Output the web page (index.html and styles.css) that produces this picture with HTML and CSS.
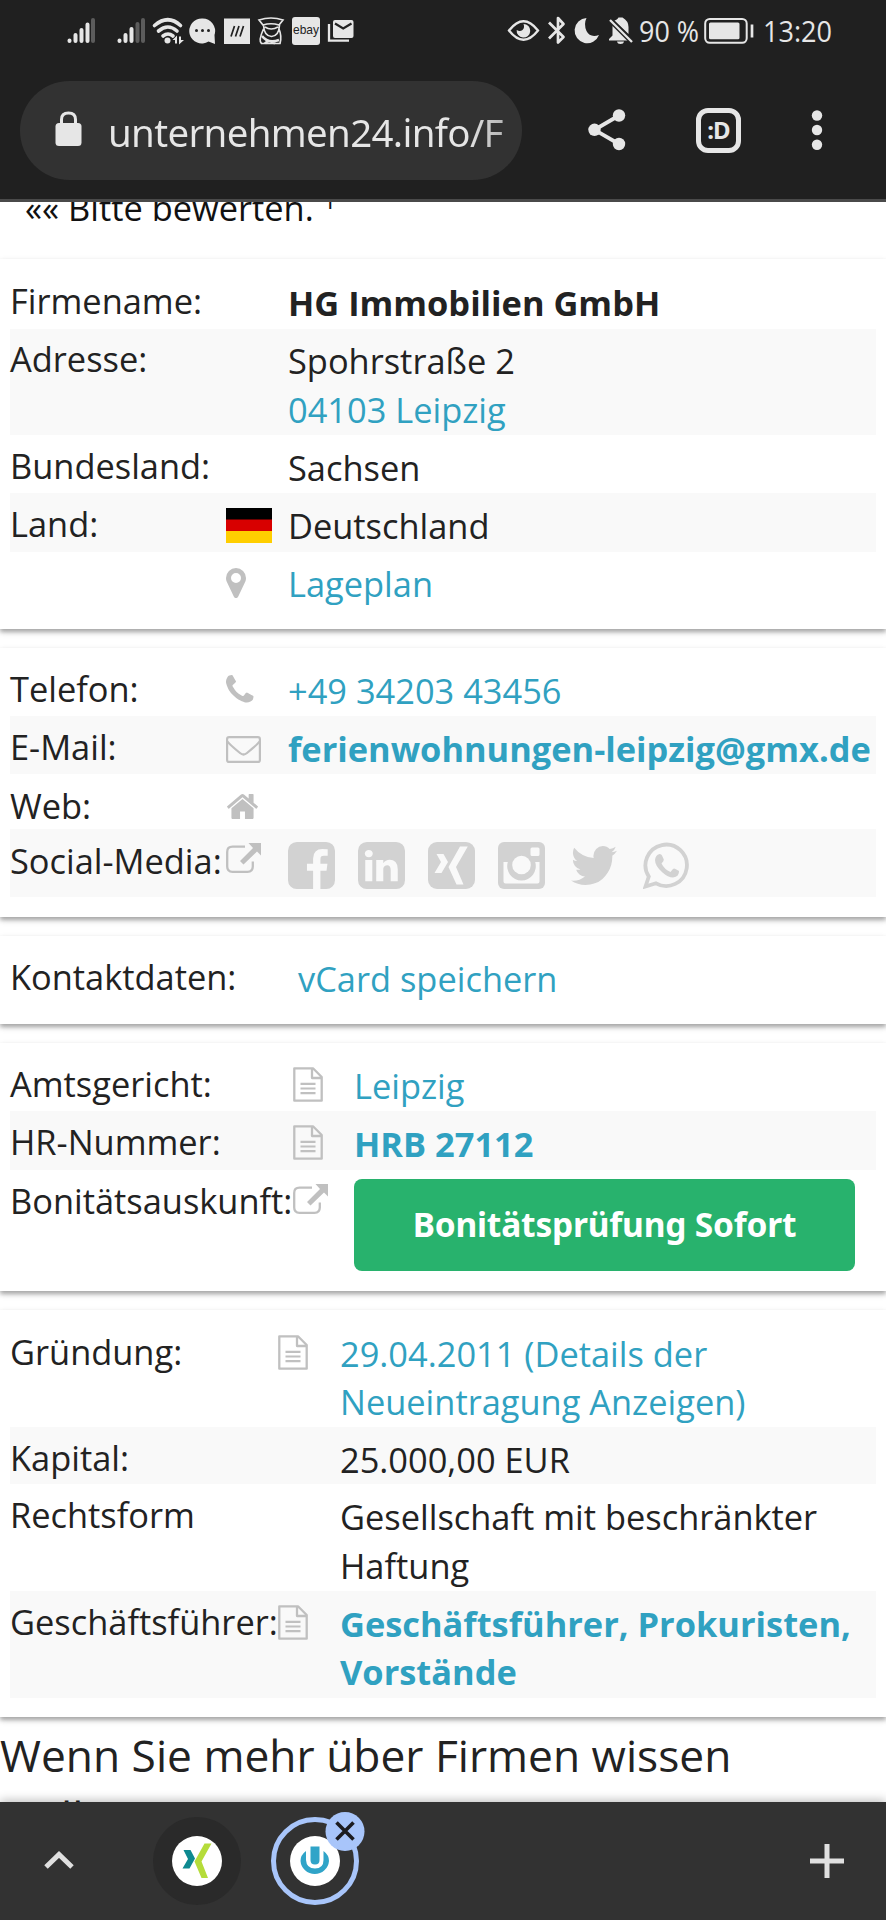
FILE: index.html
```html
<!DOCTYPE html>
<html lang="de">
<head>
<meta charset="utf-8">
<title>HG Immobilien GmbH</title>
<link rel="stylesheet" href="styles.css">
</head>
<body>
<svg class="defs" width="0" height="0">
  <symbol id="doc" viewBox="0 0 30 35"><path d="M1.3 1.3H20L28.7 10V33.7H1.3ZM19 1.3V11H28.7" fill="none" stroke="#c0c0c0" stroke-width="2.3" stroke-linejoin="round"/><path d="M7.5 16.8H22.5M7.5 21.5H22.5M7.5 26.2H22.5" stroke="#c0c0c0" stroke-width="2.2"/></symbol>
  <symbol id="ext" viewBox="0 0 35 30"><path d="M19 3.7H6.5Q1.2 3.7 1.2 9V23.5Q1.2 28.8 6.5 28.8H21.5Q26.8 28.8 26.8 23.5V18.500" fill="none" stroke="#c0c0c0" stroke-width="2.3"/><path d="M22.500 0H35V12.500L31 8.600 17.500 21.500 14 18 27 5Z" fill="#c0c0c0"/></symbol>
</svg>
<div class="screen">
  <header class="chrome">
    <div class="status">
      <svg class="icon-signal" width="47" height="62" viewBox="62 0 47 62"><g stroke="#e6e6e6" stroke-width="4" stroke-linecap="round"><path d="M69.500 40.500V41M75.500 35V41M81.500 30V41M87.500 24.500V41"/><path d="M93 20V41" stroke="#5c5c5c"/></g></svg>
      <svg width="42" height="62" viewBox="109 0 42 62"><g stroke="#e6e6e6" stroke-width="4" stroke-linecap="round"><path d="M119.500 40.500V41M125.500 35V41M131.500 29V41"/><path d="M137.500 24V41M143 20V41" stroke="#5c5c5c"/></g></svg>
      <svg width="36" height="62" viewBox="151 0 36 62"><g fill="none" stroke="#e6e6e6" stroke-width="3.600" stroke-linecap="round"><path d="M154.500 25.500Q168 14 180.500 25.500M158.500 31Q168 23 177 31M163 36Q168 32 173 36"/></g><circle cx="167.500" cy="40.500" r="3" fill="#e6e6e6"/><path d="M172.500 40 177 35.500V43.500H175V40ZM179 36.500H181V40H184L179 44.500Z" fill="#e6e6e6"/></svg>
      <svg width="33" height="62" viewBox="187 0 33 62"><path d="M202.500 18.500A12.500 12.500 0 1 0 208.500 41.500L215 44 214.500 35A12.500 12.500 0 0 0 202.500 18.500Z" fill="#e6e6e6"/><g fill="#222"><circle cx="196.500" cy="30.500" r="1.500"/><circle cx="202.500" cy="30.500" r="1.500"/><circle cx="208.500" cy="30.500" r="1.500"/></g></svg>
      <svg width="34" height="62" viewBox="220 0 34 62"><path d="M224 18.500H250V44H224Z" fill="#e6e6e6"/><path d="M231 36.500 234.500 26M235.500 36.500 239 26M240 36.500 243.500 26" stroke="#222" stroke-width="1.700"/></svg>
      <svg width="34" height="62" viewBox="254 0 34 62"><g fill="none" stroke="#e6e6e6" stroke-width="1.700"><path d="M259 20Q271 16 283 20L279 25Q271 22.500 263 25ZM263.500 25Q264 36 271.500 36.500 279 36 279.500 25M265 27Q271 31 278 27M263.500 29Q258 41 261.500 43.500H280Q282 36 279 29"/><path d="M262 36Q268 44 279 40M265 43.500Q268 39 275 43.500" stroke-width="2.500"/></g></svg>
      <svg width="36" height="62" viewBox="288 0 36 62"><rect x="292" y="17" width="28" height="28" rx="3" fill="#e6e6e6"/><text class="ebay" x="293" y="34" textLength="26" lengthAdjust="spacingAndGlyphs">ebay</text></svg>
      <svg width="34" height="62" viewBox="324 0 34 62"><rect x="333" y="20" width="20.500" height="18" rx="2" fill="#e6e6e6"/><path d="M335 23.500 343.200 28.500 351.500 23.500" fill="none" stroke="#222" stroke-width="2.200"/><path d="M329 24V40.700H349" fill="none" stroke="#e6e6e6" stroke-width="2.300"/></svg>
      <svg class="icon-eye" width="38" height="62" viewBox="504 0 38 62"><path d="M509 30.500Q523.500 12 538 30.500 523.500 49 509 30.500Z" fill="none" stroke="#e6e6e6" stroke-width="2.300"/><path d="M523.500 24A6.800 6.800 0 1 1 516.700 30Q520 32 522.500 30 525 27.500 523.500 24Z" fill="#e6e6e6"/></svg>
      <svg width="30" height="62" viewBox="542 0 30 62"><path d="M549 22.500 563.500 37 558 42.500V18L563.500 24 549 38.500" fill="none" stroke="#e6e6e6" stroke-width="2.700" stroke-linejoin="round"/></svg>
      <svg width="32" height="62" viewBox="572 0 32 62"><path d="M586.500 18A12.600 12.600 0 1 0 599 35Q590 38 586.500 31 583.500 24 586.500 18Z" fill="#e6e6e6"/></svg>
      <svg width="34" height="62" viewBox="604 0 34 62"><path d="M612 22 630 40.500H609V39L612.500 35.500V27Q612.500 24 613.500 22.500ZM616 20Q618 18.800 618.500 17.500H622.500Q628.500 21 628.500 27V34L614.500 20.500ZM617 41.500H624Q623.500 44 620.500 44T617 41.500Z" fill="#e6e6e6"/><path d="M610 20 632 42" stroke="#222" stroke-width="5"/><path d="M610 20 632 42" stroke="#e6e6e6" stroke-width="2.300"/></svg>
      <svg width="64" height="62" viewBox="638 0 64 62"><text class="status-text" x="639" y="42" textLength="60" lengthAdjust="spacingAndGlyphs">90 %</text></svg>
      <svg width="55" height="62" viewBox="702 0 55 62"><rect x="705.200" y="19" width="41.500" height="23.800" rx="4.500" fill="none" stroke="#e6e6e6" stroke-width="2"/><rect x="709" y="22.500" width="30.500" height="16.800" rx="1.500" fill="#e6e6e6"/><path d="M752 24.500V37.500" stroke="#e6e6e6" stroke-width="2.700"/></svg>
      <svg width="80" height="62" viewBox="757 0 80 62"><text class="status-text" x="763" y="42" textLength="69" lengthAdjust="spacingAndGlyphs">13:20</text></svg>
    </div>
    <div class="toolbar">
      <div class="omnibox">
        <svg width="27" height="36" viewBox="0 0 27 36"><rect x="0.500" y="12" width="26" height="23" rx="3.500" fill="#e6e6e6"/><path d="M6.500 13V8.500Q6.500 2 13.500 2T20.500 8.500V13" fill="none" stroke="#e6e6e6" stroke-width="3"/></svg>
        <span class="url">unternehmen24.info/F</span>
      </div>
      <svg class="share" width="38" height="42" viewBox="0 0 38 42"><path d="M31 6.500 6.500 20.800 31 35" fill="none" stroke="#e6e6e6" stroke-width="3.800"/><g fill="#e6e6e6"><circle cx="31" cy="6.500" r="6.200"/><circle cx="6.500" cy="20.800" r="6.200"/><circle cx="31" cy="35" r="6.200"/></g></svg>
      <div class="tabs">:D</div>
      <svg class="dots" width="12" height="42" viewBox="0 0 12 42" fill="#e6e6e6"><circle cx="6" cy="6.500" r="5.200"/><circle cx="6" cy="21" r="5.200"/><circle cx="6" cy="35.800" r="5.200"/></svg>
    </div>
  </header>

  <main class="page">
    <div class="rating"><span class="rating-text">«« Bitte bewerten. <sup>1</sup></span></div>

    <section class="card card-firm">
      <div class="row"><div class="label">Firmename:</div><div class="icon"></div><div class="value strong">HG Immobilien GmbH</div></div>
      <div class="row striped double"><div class="label">Adresse:</div><div class="icon"></div><div class="value">Spohrstraße 2<br><a>04103 Leipzig</a></div></div>
      <div class="row"><div class="label">Bundesland:</div><div class="icon"></div><div class="value">Sachsen</div></div>
      <div class="row striped"><div class="label">Land:</div><div class="icon flag-cell"><svg width="46" height="35" viewBox="0 0 46 35"><path d="M0 0H46V12H0Z"/><path d="M0 11.500H46V23.500H0Z" fill="#d80000"/><path d="M0 23H46V35H0Z" fill="#ffce00"/></svg></div><div class="value">Deutschland</div></div>
      <div class="row"><div class="label"></div><div class="icon pin-cell"><svg width="20" height="30" viewBox="384 128 1024 1536" fill="#c0c0c0"><path d="M1152 640q0-106-75-181t-181-75-181 75-75 181 75 181 181 75 181-75 75-181zm256 0q0 109-33 179l-364 774q-16 33-47.500 52t-67.500 19-67.500-19-46.500-52l-365-774q-33-70-33-179 0-212 150-362t362-150 362 150 150 362z"/></svg></div><div class="value"><a>Lageplan</a></div></div>
    </section>

    <section class="card card-contact">
      <div class="row"><div class="label">Telefon:</div><div class="icon phone-cell"><svg width="27.500" height="27.500" viewBox="192 128 1408 1408" fill="#c0c0c0"><path d="M1600 1240q0 27-10 70.500t-21 68.500q-21 50-122 106-94 51-186 51-27 0-52.500-3.500t-57.500-12.500-47.500-14.500-55.500-20.500-49-18q-98-35-175-83-128-79-264.500-215.500t-215.500-264.500q-48-77-83-175-3-9-18-49t-20.500-55.500-14.500-47.500-12.500-57.500-3.500-52.500q0-92 51-186 56-101 106-122 25-11 68.500-21t70.500-10q14 0 21 3 18 6 53 76 11 19 30 54t35 63.500 31 53.500q3 4 17.500 25t21.500 35.500 7 28.500q0 20-28.500 50t-62 55-62 53-28.500 46q0 9 5 22.500t8.500 20.500 14 24 11.500 19q76 137 174 235t235 174q2 1 19 11.500t24 14 20.500 8.500 22.500 5q18 0 46-28.500t53-62 55-62 50-28.500q14 0 28.500 7t35.500 21.500 25 17.500q25 15 53.500 31t63.500 35 54 30q70 35 76 53 3 7 3 21z"/></svg></div><div class="value"><a>+49 34203 43456</a></div></div>
      <div class="row striped"><div class="label">E-Mail:</div><div class="icon mail-cell"><svg width="35" height="27" viewBox="0 0 35 27" fill="none" stroke="#c0c0c0" stroke-width="2.200"><rect x="1.100" y="1.100" width="32.800" height="24.800" rx="2"/><path d="M1.500 5.500Q3 8 14 17 17.500 20 21 17 32 8 33.500 5.500"/></svg></div><div class="value strong"><a>ferienwohnungen-leipzig@gmx.de</a></div></div>
      <div class="row web"><div class="label">Web:</div><div class="icon home-cell"><svg width="31" height="25" viewBox="89 253 1614 1283" fill="#c0c0c0" preserveAspectRatio="none"><path d="M1472 992v480q0 26-19 45t-45 19h-384v-384h-256v384h-384q-26 0-45-19t-19-45v-480q0-1 .5-3t.5-3l575-474 575 474q1 2 1 6zm223-69l-62 74q-8 9-21 11h-3q-13 0-21-7l-692-577-692 577q-12 8-24 7-13-2-21-11l-62-74q-8-10-7-23.500t11-21.500l719-599q32-26 76-26t76 26l244 204v-195q0-14 9-23t23-9h192q14 0 23 9t9 23v408l219 182q10 8 11 21.500t-7 23.500z"/></svg></div><div class="value"></div></div>
      <div class="row striped social"><div class="label">Social-Media:</div><div class="icon ext-cell"><svg width="35" height="30"><use href="#ext"/></svg></div>
        <div class="value socials">
          <svg width="47" height="47" viewBox="128 128 1536 1536"><path d="M1376 128q119 0 203.500 84.500t84.500 203.500v960q0 119-84.500 203.500t-203.500 84.500h-188v-595h199l30-232h-229v-148q0-56 23.500-84t91.500-28l122-1v-207q-63-9-178-9-136 0-217.500 80t-81.500 226v171h-200v232h200v595h-532q-119 0-203.500-84.500t-84.500-203.500v-960q0-119 84.500-203.500t203.500-84.500h960z"/></svg>
          <svg width="47" height="47" viewBox="128 128 1536 1536"><path d="M365 1414h231v-694h-231v694zm246-908q-1-52-36-86t-93-34-94.500 34-36.500 86q0 51 35.500 85.500t92.500 34.500h1q59 0 95-34.500t36-85.500zm585 908h231v-398q0-154-73-233t-193-79q-136 0-209 117h2v-101h-231q3 66 0 694h231v-388q0-38 7-56 15-35 45-59.500t74-24.500q116 0 116 157v371zm468-998v960q0 119-84.500 203.500t-203.500 84.500h-960q-119 0-203.500-84.500t-84.500-203.500v-960q0-119 84.500-203.500t203.500-84.500h960q119 0 203.500 84.500t84.500 203.500z"/></svg>
          <svg width="47" height="47" viewBox="0 0 47 47"><rect width="47" height="47" rx="9"/><path d="M8.500 12H15.500L20 20 13.500 31H6.500L13 20ZM32 4.500H39.800L28 25 35.500 42.500H28.500L20.500 25Z" fill="#f9f9f9"/></svg>
          <svg width="47" height="47" viewBox="0 0 47 47"><rect width="47" height="47" rx="6"/><path d="M5.500 20H9.800A14.300 14.300 0 1 0 37.200 20H41.500V39.500Q41.500 41.500 39.500 41.500H7.500Q5.500 41.500 5.500 39.500ZM34 5.500H40Q41.500 5.500 41.500 7V12.500Q41.500 14 40 14H34Q32.500 14 32.500 12.500V7Q32.500 5.500 34 5.500Z" fill="#f9f9f9"/><circle cx="23.500" cy="23" r="9.300" fill="#f9f9f9"/></svg>
          <svg class="twitter" width="46" height="39" viewBox="108 256 1576 1280" preserveAspectRatio="none"><path d="M1684 408q-67 98-162 167 1 14 1 42 0 130-38 259.500t-115.500 248.500-184.500 210.500-258 146-323 54.500q-271 0-496-145 35 4 78 4 225 0 401-138-105-2-188-64.500t-114-159.500q33 5 61 5 43 0 85-11-112-23-185.500-111.500t-73.500-205.500v-4q68 38 146 41-66-44-105-115t-39-154q0-88 44-163 121 149 294.500 238.500t371.500 99.500q-8-38-8-74 0-134 94.500-228.500t228.500-94.500q140 0 236 102 109-21 205-78-37 115-142 178 93-10 186-50z"/></svg>
          <svg width="47" height="47" viewBox="0 0 47 47"><path d="M2.500 44.500 5.800 34.500A20.700 20.700 0 1 1 13 41.300Z" fill="none" stroke="#d2d2d2" stroke-width="3.800"/><path d="M16.500 12Q18.500 12 19 13.500L20.800 17.500Q21 19 18.500 21.500 21.500 27.500 27.500 30L30 27Q31 26 32.500 27L36 29Q36.500 34.500 30 35.500 25 35.500 19.500 30.500 12 24 12 18 12.500 13 16.500 12Z"/></svg>
        </div></div>
    </section>

    <section class="card card-vcard">
      <div class="row"><div class="label">Kontaktdaten:</div><div class="icon"></div><div class="value"><a>vCard speichern</a></div></div>
    </section>

    <section class="card card-register">
      <div class="row"><div class="label">Amtsgericht:</div><div class="icon doc-cell"><svg width="30" height="35"><use href="#doc"/></svg></div><div class="value"><a>Leipzig</a></div></div>
      <div class="row striped"><div class="label">HR-Nummer:</div><div class="icon doc-cell"><svg width="30" height="35"><use href="#doc"/></svg></div><div class="value strong"><a>HRB 27112</a></div></div>
      <div class="row credit"><div class="label">Bonitätsauskunft:</div><div class="icon ext-cell"><svg width="35" height="30"><use href="#ext"/></svg></div><div class="value"><div class="button">Bonitätsprüfung Sofort</div></div></div>
    </section>

    <section class="card card-details">
      <div class="row double"><div class="label">Gründung:</div><div class="icon doc-cell"><svg width="30" height="35"><use href="#doc"/></svg></div><div class="value"><a>29.04.2011 (Details der<br>Neueintragung Anzeigen)</a></div></div>
      <div class="row striped"><div class="label">Kapital:</div><div class="icon"></div><div class="value">25.000,00 EUR</div></div>
      <div class="row double legal"><div class="label">Rechtsform</div><div class="icon"></div><div class="value">Gesellschaft mit beschränkter<br>Haftung</div></div>
      <div class="row striped double"><div class="label">Geschäftsführer:</div><div class="icon doc-cell"><svg width="30" height="35"><use href="#doc"/></svg></div><div class="value strong"><a>Geschäftsführer, Prokuristen,<br>Vorstände</a></div></div>
    </section>

    <h2 class="more">Wenn Sie mehr über Firmen wissen<br>wollen</h2>
  </main>

  <footer class="tabstrip">
    <svg class="caret" width="30" height="18" viewBox="0 0 30 18"><path d="M2 16 15 3.500 28 16" fill="none" stroke="#e0e0e0" stroke-width="5"/></svg>
    <svg class="tab-xing" width="88" height="88" viewBox="0 0 88 88"><circle cx="44" cy="44" r="44" fill="#2a2a2a"/><circle cx="44" cy="44" r="25" fill="#fff"/><path d="M30.500 33H37.500L42 41.500 36.500 51.500H29.500L35 42Z" fill="#0d8990"/><path d="M51.500 26.500H58.500L48.500 44.500 55 61H48.500L41.500 44.500Z" fill="#b5dc3a"/></svg>
    <svg class="tab-active" width="96" height="96" viewBox="0 0 96 96"><circle cx="46" cy="51" r="41.500" fill="none" stroke="#a8c5fa" stroke-width="5"/><circle cx="46" cy="51" r="25" fill="#fff"/><path d="M37 41Q31.500 45 31.500 51A14.300 14.300 0 0 0 60 51Q60 45 54.500 41V50Q54.500 58.500 46 58.500T37 50Z" fill="#30a4c8"/><path d="M41.500 36.500H50.500V50Q50.500 54.500 46 54.500T41.500 50Z" fill="#30a4c8"/><circle cx="76" cy="21.500" r="19.500" fill="#a8c5fa"/><path d="M67.500 12.500 84.500 29.500M84.500 12.500 67.500 29.500" stroke="#1c1c20" stroke-width="3.600"/></svg>
    <svg class="plus" width="34" height="34" viewBox="0 0 34 34"><path d="M17 0V34M0 17H34" stroke="#e0e0e0" stroke-width="5"/></svg>
  </footer>
</div>
</body>
</html>
```
FILE: styles.css
```css
* { box-sizing: border-box; }
body { margin: 0; background: #fff; color: #222; font-family: "Open Sans", "Noto Sans", sans-serif; font-size: 34.400px; line-height: 48.600px; }
svg { display: block; flex: none; }
.defs { position: absolute; }
.screen { width: 886px; height: 1920px; display: flex; flex-direction: column; overflow: hidden; }

.chrome { flex: none; height: 202px; background: #202020; border-bottom: 3px solid #4a4a4a; }
.status { display: flex; height: 62px; }
.icon-signal { margin-left: 62px; }
.icon-eye { margin-left: 146px; }
.status-text { font-family: "Open Sans", sans-serif; font-size: 28.500px; fill: #e6e6e6; }
.ebay { font-family: "Liberation Sans", sans-serif; font-size: 13px; fill: #222; }
.toolbar { display: flex; align-items: center; height: 98px; margin-top: 19px; padding-left: 20px; }
.omnibox { display: flex; align-items: center; width: 502px; height: 99px; padding-left: 35px; border-radius: 50px; background: #323232; color: #e6e6e6; }
.omnibox svg { margin-top: -2px; }
.url { width: 405px; margin: 3px 0 0 26px; white-space: nowrap; font-family: "Noto Sans", sans-serif; font-size: 38.500px; letter-spacing: -0.700px; line-height: 60px; background: linear-gradient(90deg, #e6e6e6 88%, #aaa); background-clip: text; -webkit-background-clip: text; color: transparent; }
.share { margin-left: 66px; }
.tabs { width: 45px; height: 45px; margin-left: 70px; border: 5px solid #e6e6e6; border-radius: 12px; color: #e6e6e6; font: bold 24px/33px "Noto Sans", sans-serif; text-align: center; letter-spacing: -1px; }
.dots { margin-left: 70px; }

.page { flex: 1; min-height: 0; overflow: hidden; }
.rating { height: 57px; padding-left: 25px; color: #111; overflow: hidden; }
.rating-text { display: block; margin-top: -18.500px; white-space: nowrap; }
.rating sup { font-size: 24px; line-height: 0; }
.card { padding: 12px 10px 0; margin-bottom: 19px; background: #fff; box-shadow: 0 3px 7px rgba(0,0,0,.14), 0 3px 4px rgba(0,0,0,.26); }
.row { display: grid; grid-template-columns: 216px 62px 1fr; height: 58.300px; white-space: nowrap; }
.row.double { height: 106.300px; }
.striped { background: #f9f9f9; }
.label { padding-top: 6.700px; }
.value { padding-top: 8.500px; }
.strong { font-weight: 700; }
a { color: #30a1c1; }
.card-firm { height: 369.500px; padding-top: 11.500px; }
.card-contact { height: 269px; padding-top: 10px; }
.card-vcard { height: 88px; padding-top: 11px; }
.card-register { height: 248.500px; padding-top: 10.500px; }
.card-details { height: 407.300px; padding-top: 11px; margin-bottom: 0; }
.card-contact .label { padding-top: 7.500px; }
.card-register .label { padding-top: 7px; }
.card-contact .value { padding-top: 9px; }
.card-register .value { padding-top: 8.500px; }
.card-vcard .row { grid-template-columns: 226px 62px 1fr; }
.card-register .row { grid-template-columns: 283px 61px 1fr; }
.card-details .row { grid-template-columns: 268px 62px 1fr; }
.card-details .striped:not(.double) { height: 56.500px; }
.card-details .legal { height: 107.500px; }
.card-details .legal .label { padding-top: 7.700px; }
.card-details .legal .value { padding-top: 9.500px; }
.row.web { height: 55px; }
.row.social { height: 68px; }
.flag-cell { padding-top: 14.500px; }
.pin-cell { padding-top: 16px; }
.phone-cell { padding-top: 17.500px; }
.mail-cell { padding-top: 20px; }
.home-cell { padding-top: 20px; padding-left: 1px; }
.ext-cell { padding-top: 14px; }
.doc-cell { padding-top: 14px; }
.card-contact .socials { display: flex; gap: 23px; padding-top: 13px; fill: #d2d2d2; }
.twitter { margin: 4px 3px 0; }
.card-register .credit .value { padding-top: 9.500px; }
.button { width: 501px; height: 92px; border-radius: 8px; background: #28b26d; color: #fff; font: 700 33.500px/91px "Noto Sans", sans-serif; letter-spacing: -0.200px; text-align: center; }
.more { margin: 0; padding-top: 6.500px; font-size: 44.300px; font-weight: 400; line-height: 62px; white-space: nowrap; }

.tabstrip { position: relative; flex: none; display: flex; height: 118px; background: #323232; box-shadow: 0 -2px 9px rgba(0,0,0,.25); }
.caret { margin: 49px 0 0 44px; }
.tab-xing { margin: 15px 0 0 79px; }
.tab-active { margin: 8px 0 0 28px; }
.plus { margin: 42px 0 0 445px; }
```
